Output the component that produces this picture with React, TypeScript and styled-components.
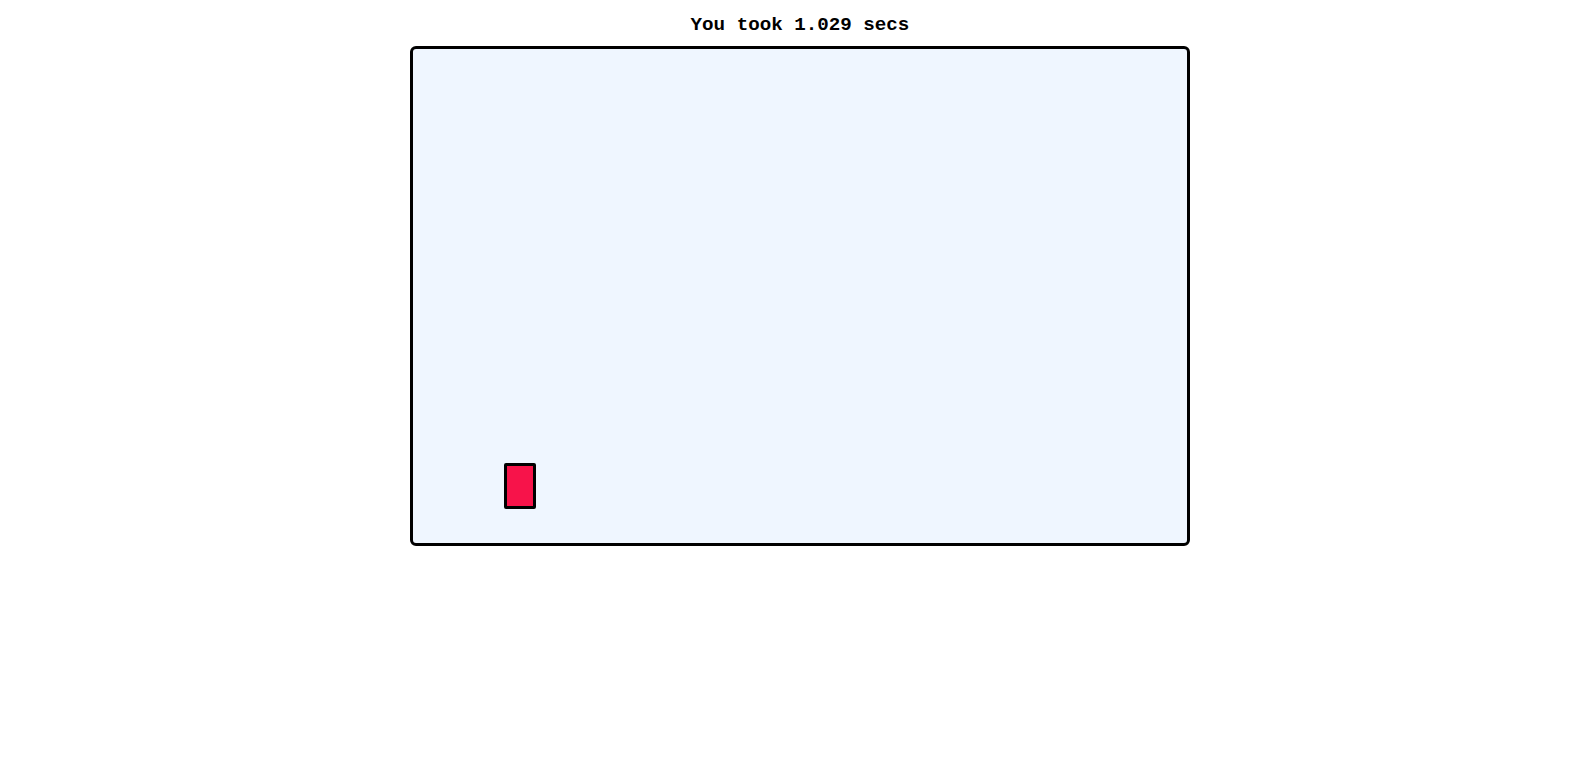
import React from "react";
import styled, { createGlobalStyle } from "styled-components";

const GlobalStyle = createGlobalStyle`
  body {
    margin: 0;
    background: #ffffff;
    font-family: "Liberation Mono", "DejaVu Sans Mono", monospace;
  }
`;

const Page = styled.div`
  display: flex;
  flex-direction: column;
  align-items: center;
  padding-left: 10px;
`;

const Timer = styled.div`
  margin: 14px 0 10px;
  font-size: 19.2px;
  line-height: 22px;
  font-weight: bold;
  color: #000;
`;

const Arena = styled.div`
  position: relative;
  box-sizing: border-box;
  width: 780px;
  height: 500px;
  border: 3px solid #000;
  border-radius: 6px;
  background-color: #eff6ff;
`;

const Target = styled.div<{ $x: number; $y: number }>`
  position: absolute;
  left: ${(p) => p.$x}px;
  top: ${(p) => p.$y}px;
  box-sizing: border-box;
  width: 32px;
  height: 46px;
  border: 3px solid #000;
  border-radius: 2px;
  background-color: #f7134a;
`;

const App: React.FC = () => {
  const seconds = 1.029;
  return (
    <>
      <GlobalStyle />
      <Page>
        <Timer>You took {seconds.toFixed(3)} secs</Timer>
        <Arena>
          <Target $x={91} $y={414} />
        </Arena>
      </Page>
    </>
  );
};

export default App;
